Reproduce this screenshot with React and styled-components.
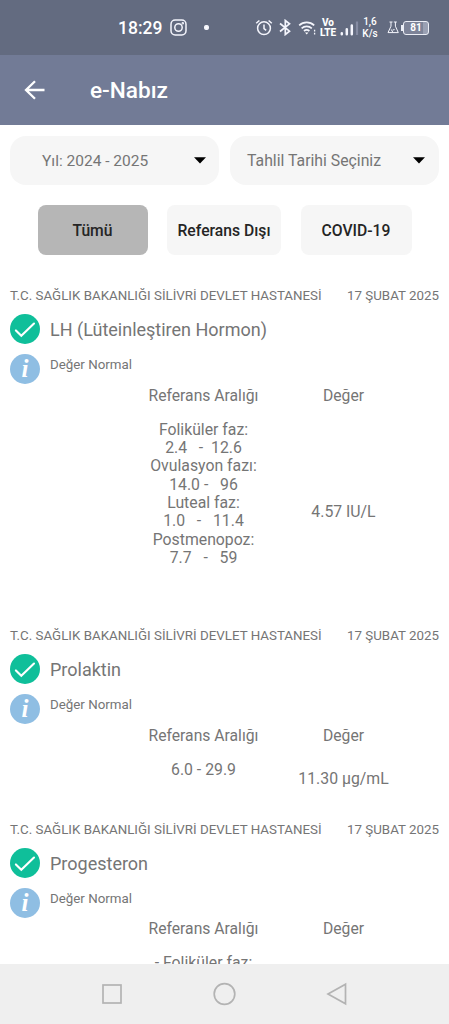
import styled, { createGlobalStyle } from "styled-components";

const results = [
    {
        name: "LH (Lüteinleştiren Hormon)",
        height: 340,
        range: [
            "Foliküler faz:",
            "2.4   -  12.6",
            "Ovulasyon fazı:",
            "14.0 -   96",
            "Luteal faz:",
            "1.0   -   11.4",
            "Postmenopoz:",
            "7.7   -   59",
        ],
        value: "4.57 IU/L",
        valueTop: 82,
    },
    {
        name: "Prolaktin",
        height: 193.6,
        range: ["6.0 - 29.9"],
        value: "11.30 μg/mL",
        valueTop: 9,
    },
    {
        name: "Progesteron",
        height: 340,
        range: ["- Foliküler faz:"],
        value: "",
        valueTop: 9,
    },
];

const App = () => {
    return (
        <Screen>
            <GlobalStyle />
            <StatusBar />

            <AppBar>
                <svg width="22" height="20" viewBox="0 0 22 20">
                    <path d="M20.5 10H2M11 1.2L2 10l9 8.8" fill="none" stroke="#fff" strokeWidth="2.3" />
                </svg>
                <h1>e-Nabız</h1>
            </AppBar>

            <Content>
                <Filters>
                    <Select $left="32px" $right="13px">
                        <Label $size="15.5px">Yıl: 2024 - 2025</Label>
                        <Caret />
                    </Select>
                    <Select $left="17px" $right="14px">
                        <Label $size="15.8px">Tahlil Tarihi Seçiniz</Label>
                        <Caret />
                    </Select>
                </Filters>

                <Tabs>
                    <Tab $width="110px" $active>Tümü</Tab>
                    <Tab $width="114px">Referans Dışı</Tab>
                    <Tab $width="111px">COVID-19</Tab>
                </Tabs>

                {results.map((item) => (
                    <Result key={item.name} item={item} />
                ))}
            </Content>

            <NavBar>
                <svg width="22" height="22" viewBox="0 0 22 22">
                    <rect x="2" y="2" width="18" height="18" />
                </svg>
                <svg width="24" height="24" viewBox="0 0 24 24">
                    <circle cx="11.5" cy="12" r="10.3" />
                </svg>
                <svg width="22" height="24" viewBox="0 0 22 24">
                    <path d="M19.5 2.2v19.6L2 12z" />
                </svg>
            </NavBar>
        </Screen>
    );
};

const Caret = () => (
    <svg width="12" height="7" viewBox="0 0 12 7">
        <path d="M0 .3h12L6 6.6z" fill="#000" />
    </svg>
);

const Result = ({ item }) => (
    <ResultBox $height={item.height}>
        <ResultHead>
            <span>T.C. SAĞLIK BAKANLIĞI SİLİVRİ DEVLET HASTANESİ</span>
            <time>17 ŞUBAT 2025</time>
        </ResultHead>

        <ResultRow>
            <svg width="30" height="30" viewBox="0 0 30 30">
                <circle cx="15" cy="15" r="15" fill="#0fbf9a" />
                <path d="M5.9 16.4l5.4 5.4L24 9.5" fill="none" stroke="#fff" strokeWidth="2.1" strokeLinecap="round" />
            </svg>
            <h2>{item.name}</h2>
        </ResultRow>

        <ResultRow $info>
            <InfoBadge>i</InfoBadge>
            <p>Değer Normal</p>
        </ResultRow>

        <Values>
            <Column $width="146px">
                <h3>Referans Aralığı</h3>
                {item.range.map((line) => (
                    <span key={line}>{line}</span>
                ))}
            </Column>
            <Column $width="134px" $top={item.valueTop}>
                <h3>Değer</h3>
                <span>{item.value}</span>
            </Column>
        </Values>
    </ResultBox>
);

const StatusBar = () => (
    <Status>
        <Clock>18:29</Clock>
        <Glyph $left="8px" width="17" height="17" viewBox="0 0 17 17">
            <rect x="1" y="1" width="15" height="15" rx="4.2" />
            <circle cx="8.5" cy="8.5" r="3.7" />
            <circle cx="12.8" cy="4.2" r=".5" />
        </Glyph>
        <Glyph $left="17px" width="5" height="5" viewBox="0 0 5 5">
            <circle cx="2.5" cy="2.5" r="1.8" fill="#fff" />
        </Glyph>
        <Glyph $left="46px" width="18" height="17" viewBox="0 0 18 17">
            <circle cx="9" cy="9.2" r="6.4" />
            <path d="M9 5.6v4l2.2 1.8M1.2 4.2L4.4 1.5M16.8 4.2l-3.2-2.7" />
        </Glyph>
        <Glyph $left="6px" width="13" height="17" viewBox="0 0 13 17">
            <path d="M1 4.5l9.5 7.7-4.2 3.3v-14l4.2 3.3L1 12.5" strokeWidth="1.7" />
        </Glyph>
        <Glyph $left="6px" width="19" height="17" viewBox="0 0 19 17">
            <path d="M1.2 6.3a11 11 0 0 1 15 0M3.6 9.3a7.5 7.5 0 0 1 10.2 0M6 12a4 4 0 0 1 5.4 0" strokeWidth="1.7" />
            <path d="M7 13.4h3.4l-1.7 2z" fill="#fff" stroke="none" />
            <path d="M16.6 10.8v1.6M16.6 13.8v1.6" strokeWidth="1.3" />
        </Glyph>
        <Stack $left="3px" $bold>
            <span>Vo</span>
            <span>LTE</span>
        </Stack>
        <Glyph $left="4px" width="19" height="17" viewBox="0 0 19 17">
            <path d="M1.8 14.2v1M6.8 10.3v4.9M11.8 6.5v8.7" strokeWidth="2.5" strokeLinecap="round" />
            <path d="M17 2.5v13.5" stroke="#858ba2" strokeWidth="2.2" />
        </Glyph>
        <Stack $left="3px">
            <span>1,6</span>
            <span>K/s</span>
        </Stack>
        <Glyph $left="9px" width="12" height="13" viewBox="0 0 12 13">
            <path d="M2.5 1h3M4 1v4.2L1 11.6h5M6.8 1h3M8.4 1v4.2l2.9 6.4H6L4.2 8.4M5.6 9l2-.4" strokeWidth="1" />
        </Glyph>
        <Battery>81</Battery>
    </Status>
);

const GlobalStyle = createGlobalStyle`
    * {
        box-sizing: border-box;
    }

    body {
        margin: 0;
        background: #fff;
        font-family: Roboto, sans-serif;
    }

    h1, h2, h3, p {
        margin: 0;
        font-weight: 400;
    }

    svg {
        display: block;
        flex-shrink: 0;
    }
`;

const Screen = styled.div`
    display: flex;
    flex-direction: column;
    width: 449px;
    height: 1024px;
    overflow: hidden;
`;

const Status = styled.header`
    display: flex;
    align-items: center;
    flex-shrink: 0;
    height: 55px;
    padding-left: 118px;
    background: #636b80;
    color: #fff;
`;

const Clock = styled.span`
    width: 44px;
    font-size: 17.5px;
    font-weight: 500;
    line-height: 20px;
    white-space: nowrap;
`;

const Glyph = styled.svg`
    margin-left: ${({ $left }) => $left};
    fill: none;
    stroke: #f4f5fc;
    stroke-width: 1.5;
`;

const Stack = styled.span`
    display: flex;
    flex-direction: column;
    align-items: center;
    width: 16px;
    margin-left: ${({ $left }) => $left};
    font-size: 10px;
    font-weight: ${({ $bold }) => ($bold ? 800 : 500)};
    line-height: ${({ $bold }) => ($bold ? "10px" : "12px")};
    white-space: nowrap;
`;

const Battery = styled.span`
    position: relative;
    width: 26px;
    height: 14px;
    margin-left: 4px;
    border: 1.5px solid #eceef6;
    border-radius: 3px;
    background: linear-gradient(90deg, #7d8398 80%, #9aa0b3 80%);
    font-size: 10px;
    font-weight: 700;
    line-height: 12px;
    text-align: center;

    &::before {
        content: "";
        position: absolute;
        top: 3px;
        left: -3px;
        width: 2px;
        height: 6px;
        background: #eceef6;
    }
`;

const AppBar = styled.div`
    display: flex;
    align-items: center;
    flex-shrink: 0;
    height: 70px;
    padding-left: 24px;
    background: #727b96;
    color: #fff;

    h1 {
        margin-left: 44px;
        padding-top: 2px;
        font-size: 22.6px;
        font-weight: 500;
        line-height: 28px;
    }
`;

const Content = styled.main`
    flex: 1;
    min-height: 0;
    overflow: hidden;
    color: #757575;
`;

const Filters = styled.div`
    display: flex;
    gap: 11px;
    padding: 11px 10px 0;
`;

const Select = styled.div`
    display: flex;
    align-items: center;
    justify-content: space-between;
    width: 209px;
    height: 49px;
    padding: 0 ${({ $right }) => $right} 0 ${({ $left }) => $left};
    border-radius: 16px;
    background: #f6f6f6;
`;

const Label = styled.span`
    font-size: ${({ $size }) => $size};
    line-height: 20px;
    white-space: nowrap;
`;

const Tabs = styled.div`
    display: flex;
    justify-content: center;
    gap: 19.5px;
    height: 95px;
    padding-top: 20px;
`;

const Tab = styled.button`
    width: ${({ $width }) => $width};
    height: 50px;
    padding: 0;
    border: 0;
    border-radius: 8px;
    background: ${({ $active }) => ($active ? "#b6b6b6" : "#f6f6f6")};
    color: #252525;
    font-family: inherit;
    font-size: 15.7px;
    font-weight: 500;
    white-space: nowrap;
`;

const ResultBox = styled.section`
    height: ${({ $height }) => $height}px;
    padding: 6px 10px 0;
`;

const ResultHead = styled.div`
    display: flex;
    justify-content: space-between;
    font-size: 13.33px;
    line-height: 20px;
    white-space: nowrap;
`;

const ResultRow = styled.div`
    display: flex;
    height: 30px;
    margin-top: ${({ $info }) => ($info ? "10px" : "8px")};

    h2 {
        margin-left: 10px;
        font-size: 18px;
        line-height: 31px;
    }

    p {
        margin-left: 10px;
        font-size: 13.33px;
        line-height: 22px;
    }
`;

const InfoBadge = styled.span`
    width: 30px;
    height: 30px;
    border-radius: 50%;
    background: #8fbee3;
    color: #fff;
    font-family: "Liberation Serif", serif;
    font-size: 25px;
    font-style: italic;
    font-weight: 700;
    line-height: 29px;
    text-align: center;
`;

const Values = styled.div`
    display: flex;
    padding-left: 120.5px;
`;

const Column = styled.div`
    display: flex;
    flex-direction: column;
    align-items: center;
    width: ${({ $width }) => $width};
    font-size: 15.8px;
    line-height: 18.3px;
    white-space: pre;

    h3 {
        margin: 2.5px 0 ${({ $top = 0 }) => 16 + $top}px;
        font-size: 15.7px;
        line-height: 18.3px;
    }
`;

const NavBar = styled.nav`
    display: flex;
    align-items: center;
    justify-content: space-between;
    flex-shrink: 0;
    height: 60px;
    padding: 0 101px;
    background: #efefef;

    svg {
        fill: none;
        stroke: #b3b3b3;
        stroke-width: 1.7;
    }
`;

export default App;
